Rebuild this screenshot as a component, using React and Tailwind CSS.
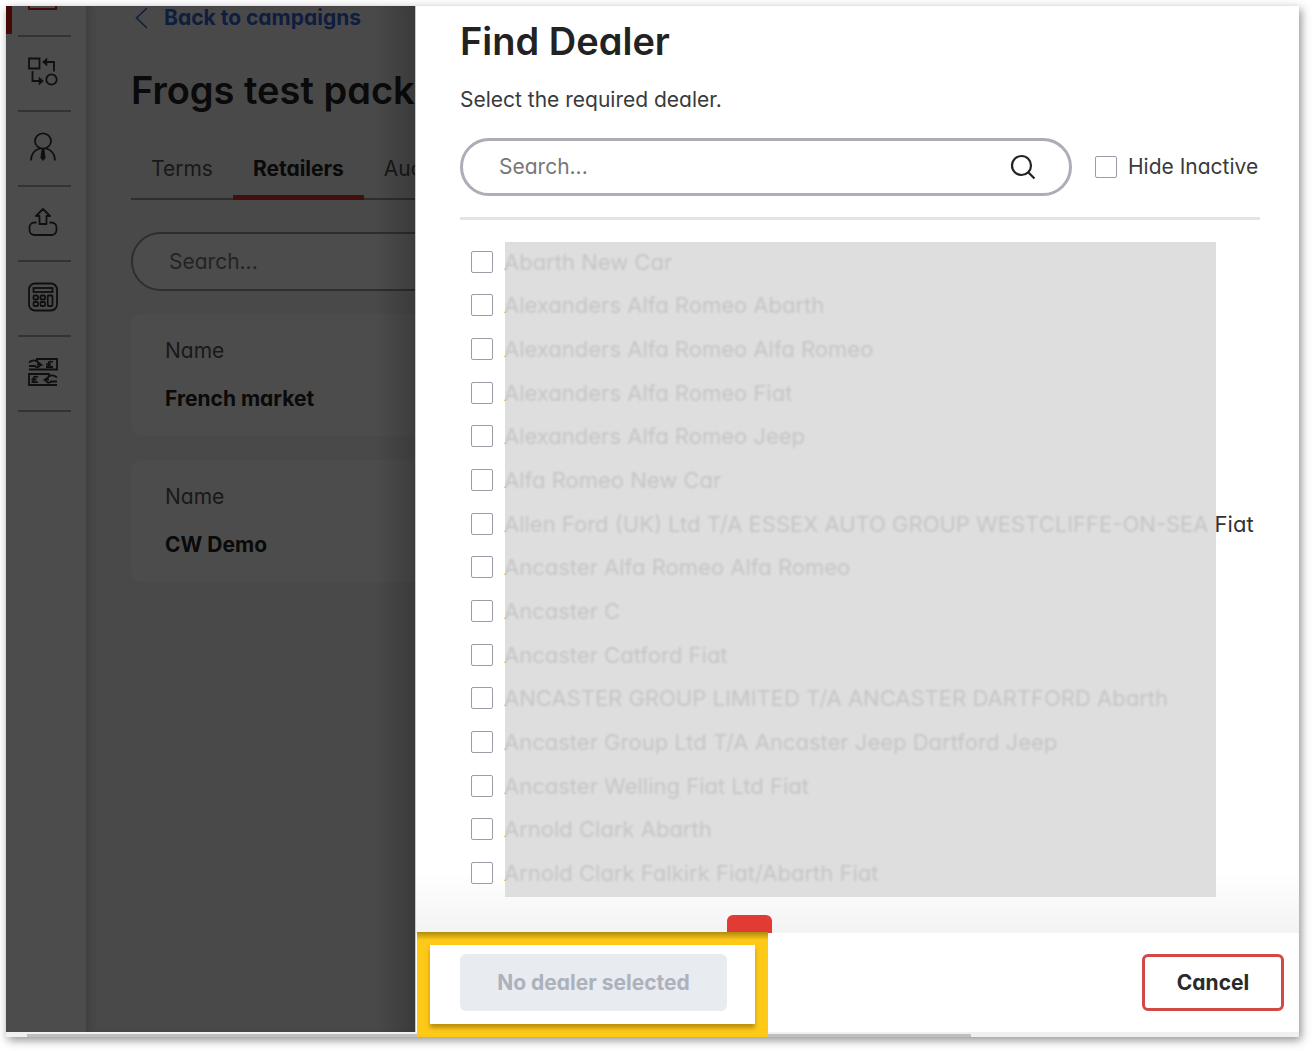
import React from "react";

const dealers = [
  "Abarth New Car",
  "Alexanders Alfa Romeo Abarth",
  "Alexanders Alfa Romeo Alfa Romeo",
  "Alexanders Alfa Romeo Fiat",
  "Alexanders Alfa Romeo Jeep",
  "Alfa Romeo New Car",
  "Allen Ford (UK) Ltd T/A ESSEX AUTO GROUP WESTCLIFFE-ON-SEA Fiat",
  "Ancaster Alfa Romeo Alfa Romeo",
  "Ancaster C",
  "Ancaster Catford Fiat",
  "ANCASTER GROUP LIMITED T/A ANCASTER DARTFORD Abarth",
  "Ancaster Group Ltd T/A Ancaster Jeep Dartford Jeep",
  "Ancaster Welling Fiat Ltd Fiat",
  "Arnold Clark Abarth",
  "Arnold Clark Falkirk Fiat/Abarth Fiat",
];

const iconProps = {
  width: 30,
  height: 30,
  viewBox: "0 0 30 30",
  fill: "none",
  stroke: "currentColor",
  strokeWidth: 1.8,
  "aria-hidden": true,
};

function SwapIcon() {
  return (
    <svg {...iconProps}>
      <path d="M1 1.500h10.500v10H1z" />
      <path d="M26 14.500V5H15.500" />
      <path d="M19 1 14.500 5 19 9z" fill="currentColor" strokeWidth="0.500" />
      <path d="M4.500 14V24H13" />
      <path d="M11 20 15.500 24 11 28z" fill="currentColor" strokeWidth="0.500" />
      <circle cx="23.500" cy="22.500" r="5.200" />
    </svg>
  );
}

function AgentIcon() {
  return (
    <svg {...iconProps}>
      <ellipse cx="15" cy="9" rx="8" ry="7.700" />
      <path d="M3 28.500c0-6 3.500-10.500 9-12M27 28.500c0-6-3.500-10.500-9-12" />
      <path d="M14 17h2l1.200 9L15 28.500 12.800 26z" fill="currentColor" strokeWidth="0.800" />
    </svg>
  );
}

function UploadIcon() {
  return (
    <svg {...iconProps}>
      <path d="M15 2 22 9h-3.500v8h-7V9H8z" strokeLinejoin="round" />
      <path d="M8.500 15.500H6.500a5 5 0 0 0-5 5v2.500a5 5 0 0 0 5 5h17a5 5 0 0 0 5-5v-2.500a5 5 0 0 0-5-5h-2" />
    </svg>
  );
}

function CalculatorIcon() {
  return (
    <svg {...iconProps}>
      <rect x="1" y="1.500" width="28" height="27" rx="6" />
      <g strokeWidth="1.800">
        <rect x="5.500" y="6" width="19" height="4" />
        <rect x="5.500" y="13.500" width="4.500" height="4" rx="1" />
        <rect x="12.500" y="13.500" width="4.500" height="4" rx="1" />
        <rect x="5.500" y="20" width="4.500" height="4" rx="1" />
        <rect x="12.500" y="20" width="4.500" height="4" rx="1" />
        <rect x="19.700" y="13.500" width="4.800" height="10.500" rx="1" />
      </g>
    </svg>
  );
}

function MoneyIcon() {
  return (
    <svg {...iconProps}>
      <g strokeWidth="1.800">
        <path d="M9 4V2h20v10.500H1" />
        <path d="M1 5.500c3-2.500 6-2.500 8-1l4 3h-4M1 9h6c1 1.500 3.500 1.500 4.500 0l1.500-1.500" />
        <path d="M25 5c-3.500-1-4.500 0-4.500 2v3M18 7.500h5M18 10h7" />
        <path d="M21 19v-2H1v11h28" />
        <path d="M10 20c-3.500-1-4.500 0-4.500 2v3M3.500 22.500h5M3.500 25.200h6.500" />
        <path d="M29 20.500c-3-2.500-6-2.500-8-1l-4 3h4M29 24.500h-6c-1 1.500-3.500 1.500-4.500 0L17 22.500" />
      </g>
    </svg>
  );
}

const navItems = [
  { label: "Transfers", Icon: SwapIcon },
  { label: "Agents", Icon: AgentIcon },
  { label: "Uploads", Icon: UploadIcon },
  { label: "Calculator", Icon: CalculatorIcon },
  { label: "Payments", Icon: MoneyIcon },
];

function Sidebar() {
  return (
    <nav className="w-20 shrink-0 bg-white text-[#333]">
      <a href="#campaigns" aria-label="Campaigns" className="flex h-[29px] items-start">
        <span className="h-7 w-[6px] bg-[#e2231a]" />
        <span className="ml-4 h-1 w-[29px] border-2 border-t-0 border-[#e2231a]" />
      </a>
      {navItems.map(({ label, Icon }) => (
        <a
          key={label}
          href={"#" + label.toLowerCase()}
          aria-label={label}
          className="ml-3 flex h-[75px] w-[53px] border-t-2 border-[#aaa] pt-5 pl-[10px]"
        >
          <Icon />
        </a>
      ))}
      <div className="ml-3 w-[53px] border-t-2 border-[#aaa]" />
    </nav>
  );
}

function RetailerCard({ name }) {
  return (
    <article className="rounded-xl bg-white px-[34px] py-[23px]">
      <p className="text-[#555]">Name</p>
      <p className="mt-5 font-bold text-[#222]">{name}</p>
    </article>
  );
}

function CampaignPage() {
  return (
    <main className="min-w-0 flex-1 overflow-hidden bg-[#f4f4f4] pl-[45px] whitespace-nowrap shadow-[inset_8px_0_8px_-4px_rgba(120,140,170,0.35)]">
      <div className="w-[560px]">
        <a href="#back" className="flex h-6 items-center gap-4 pl-1 font-bold text-[#3461d0]">
          <svg width="13" height="22" viewBox="0 0 13 22" fill="none" stroke="currentColor" strokeWidth="1.600" aria-hidden="true">
            <path d="M12 1 1.500 11 12 21" />
          </svg>
          Back to campaigns
        </a>
        <h1 className="mt-9 text-[38px] leading-12 font-semibold text-[#222]">Frogs test package</h1>
        <div className="mt-8 flex h-[54px] border-b-2 border-[#999]" role="tablist">
          <button type="button" role="tab" aria-selected="false" className="h-[54px] px-5 pb-[9px] text-[#555]">Terms</button>
          <button type="button" role="tab" aria-selected="true" className="h-[54px] border-b-5 border-[#e2352f] px-5 pb-1 font-bold text-[#222]">
            Retailers
          </button>
          <button type="button" role="tab" aria-selected="false" className="h-[54px] px-5 pb-[9px] text-[#555]">Audit</button>
        </div>
        <input
          type="search"
          aria-label="Search retailers"
          placeholder="Search..."
          className="mt-8 block h-[59px] w-full rounded-full border-2 border-[#999] bg-white px-9 placeholder:text-[#777]"
        />
        <div className="mt-[23px] flex flex-col gap-6">
          <RetailerCard name="French market" />
          <RetailerCard name="CW Demo" />
        </div>
      </div>
    </main>
  );
}

function Checkbox({ id }) {
  return (
    <input
      id={id}
      type="checkbox"
      className="size-[22px] shrink-0 appearance-none rounded-xs border border-[#9a9da8] bg-white checked:bg-[#e23b33]"
    />
  );
}

function DealerList() {
  return (
    <div className="relative mt-5 flex-1">
      <ul className="grid h-full auto-rows-fr">
        {dealers.map((dealer, i) => (
          <li key={dealer} className="flex items-center gap-[11px] pl-[11px] text-[22px] leading-7 whitespace-nowrap text-[#333]">
            <Checkbox id={"dealer-" + i} />
            <label htmlFor={"dealer-" + i}>{dealer}</label>
          </li>
        ))}
      </ul>
      <div className="pointer-events-none absolute top-[2px] right-11 -bottom-[2px] left-[45px] bg-[#dadada]/88 backdrop-blur-[1px]" />
    </div>
  );
}

function FindDealerDialog() {
  return (
    <section
      role="dialog"
      aria-labelledby="find-dealer-title"
      className="flex min-w-0 flex-1 flex-col border-l border-[#c9c9c9] bg-white text-[#3a3a3a]"
    >
      <div className="flex flex-1 flex-col bg-linear-to-t from-[#f3f3f3] to-white to-[60px] pt-[11px] pr-[39px] pl-11">
        <h2 id="find-dealer-title" className="text-[38px] leading-12 font-semibold text-[#222]">Find Dealer</h2>
        <p className="mt-[21px]">Select the required dealer.</p>
        <div className="mt-6 flex items-center">
          <div className="flex h-[58px] min-w-0 flex-1 items-center rounded-full border-[3px] border-[#abadb7] bg-white pr-[33px] pl-9">
            <input
              type="search"
              aria-label="Search dealers"
              placeholder="Search..."
              className="min-w-0 flex-1 bg-transparent outline-none placeholder:text-[#777]"
            />
            <button type="button" aria-label="Search" className="text-[#222]">
              <svg width="26" height="26" viewBox="0 0 26 26" fill="none" stroke="currentColor" strokeWidth="2.200" aria-hidden="true">
                <circle cx="11.500" cy="11.500" r="9.500" />
                <path d="m18.500 18.500 6 6" />
              </svg>
            </button>
          </div>
          <div className="ml-[23px] flex items-center gap-[11px]">
            <Checkbox id="hide-inactive" />
            <label htmlFor="hide-inactive" className="w-[132px] whitespace-nowrap">Hide Inactive</label>
          </div>
        </div>
        <hr className="mt-[21px] border-t-[3px] border-[#e3e3e3]" />
        <DealerList />
        <div className="mt-5 ml-[267px] h-[18px] w-[45px] rounded-t-md bg-[#e23b33]" />
      </div>
      <footer className="relative flex h-[99px] items-center justify-between bg-white pr-[15px] pb-px pl-11">
        <div className="pointer-events-none absolute -top-px -bottom-[5px] left-px w-[351px] border-13 border-[#ffc918]">
          <div className="h-full shadow-[0_4px_4px_rgba(120,90,0,0.500)]" />
        </div>
        <div className="pointer-events-none absolute -top-px left-px h-2 w-[351px] bg-linear-to-b from-[#b08a0e] to-transparent" />
        <button
          type="button"
          disabled
          className="relative h-[57px] w-[267px] rounded-md bg-[#e8ebf0] pt-[2px] font-bold text-[#adb1bb]"
        >
          No dealer selected
        </button>
        <button type="button" className="h-[57px] w-[142px] rounded-md border-[3px] border-[#d14a46] bg-white pt-[2px] font-bold text-[#2a2a2a]">
          Cancel
        </button>
      </footer>
    </section>
  );
}

export default function App() {
  return (
    <div className="flex min-h-screen flex-col bg-white pt-[6px] pr-[14px] pb-[14px] pl-[6px] font-[Inter,'Open_Sans',sans-serif] text-[21px] leading-7 [font-feature-settings:'cv11']">
      <div className="flex flex-1 flex-col shadow-[2px_3px_9px_rgba(0,0,0,0.450)]">
        <div className="flex flex-1">
          <div className="relative flex w-[409px] shrink-0">
            <Sidebar />
            <CampaignPage />
            <div className="absolute inset-0 bg-black/70" />
            <div className="absolute inset-y-0 right-0 w-10 bg-linear-to-l from-black/20 to-transparent" />
          </div>
          <FindDealerDialog />
        </div>
        <div className="flex h-[5px] items-end bg-[#f0f0f0]">
          <div className="ml-[21px] h-[3px] w-[73%] bg-[#bfbfbf]" />
        </div>
      </div>
    </div>
  );
}
